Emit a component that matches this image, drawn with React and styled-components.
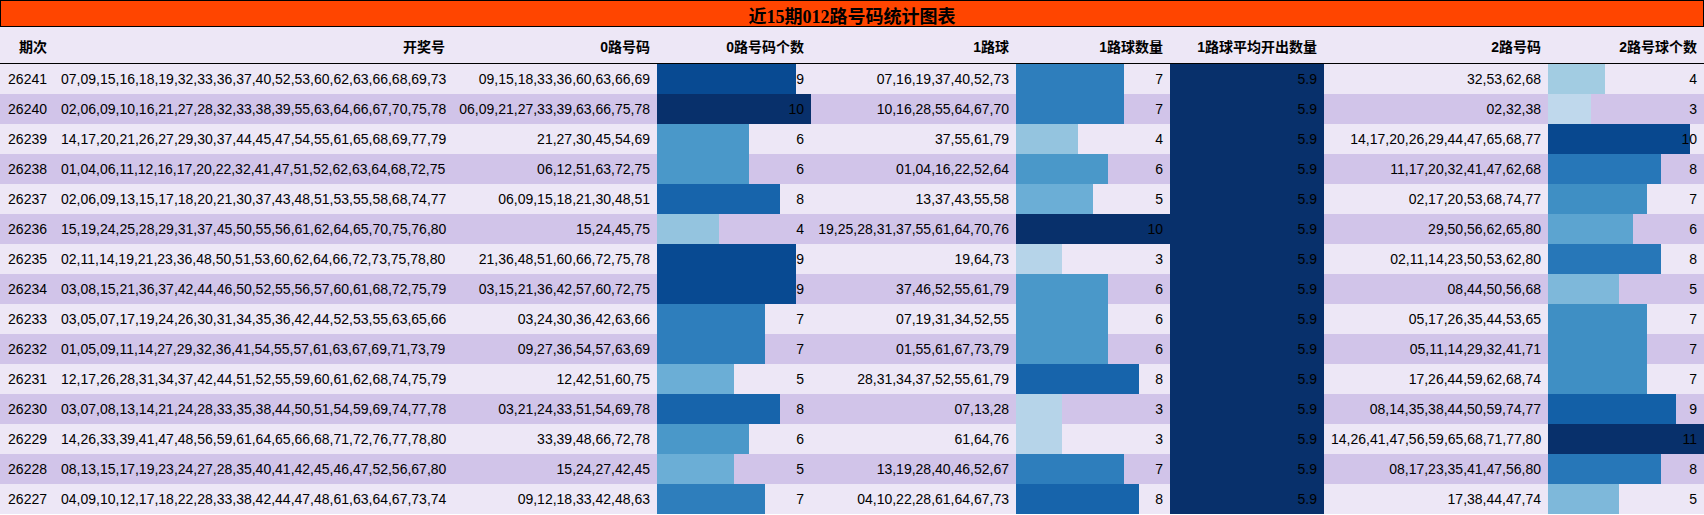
import React from 'react';
import styled, { createGlobalStyle } from 'styled-components';

const GlobalStyle = createGlobalStyle`
  html, body { margin: 0; padding: 0; background: #ffffff; }
  body { font-family: "Liberation Sans", "Noto Sans CJK SC", sans-serif; color: #000; }
`;

const BLUES = ['#f7fbff', '#deebf7', '#c6dbef', '#9ecae1', '#6baed6', '#4292c6', '#2171b5', '#08519c', '#08306b'];

function hexToRgb(h) {
  const n = parseInt(h.slice(1), 16);
  return [(n >> 16) & 255, (n >> 8) & 255, n & 255];
}

function blues(t) {
  const x = Math.max(0, Math.min(1, t)) * (BLUES.length - 1);
  const i = Math.min(Math.floor(x), BLUES.length - 2);
  const f = x - i;
  const a = hexToRgb(BLUES[i]);
  const b = hexToRgb(BLUES[i + 1]);
  const c = a.map((v, k) => Math.round(v + (b[k] - v) * f));
  return `rgb(${c[0]}, ${c[1]}, ${c[2]})`;
}

const rows = [
  ['26241', '07,09,15,16,18,19,32,33,36,37,40,52,53,60,62,63,66,68,69,73', '09,15,18,33,36,60,63,66,69', 9, '07,16,19,37,40,52,73', 7, 5.9, '32,53,62,68', 4],
  ['26240', '02,06,09,10,16,21,27,28,32,33,38,39,55,63,64,66,67,70,75,78', '06,09,21,27,33,39,63,66,75,78', 10, '10,16,28,55,64,67,70', 7, 5.9, '02,32,38', 3],
  ['26239', '14,17,20,21,26,27,29,30,37,44,45,47,54,55,61,65,68,69,77,79', '21,27,30,45,54,69', 6, '37,55,61,79', 4, 5.9, '14,17,20,26,29,44,47,65,68,77', 10],
  ['26238', '01,04,06,11,12,16,17,20,22,32,41,47,51,52,62,63,64,68,72,75', '06,12,51,63,72,75', 6, '01,04,16,22,52,64', 6, 5.9, '11,17,20,32,41,47,62,68', 8],
  ['26237', '02,06,09,13,15,17,18,20,21,30,37,43,48,51,53,55,58,68,74,77', '06,09,15,18,21,30,48,51', 8, '13,37,43,55,58', 5, 5.9, '02,17,20,53,68,74,77', 7],
  ['26236', '15,19,24,25,28,29,31,37,45,50,55,56,61,62,64,65,70,75,76,80', '15,24,45,75', 4, '19,25,28,31,37,55,61,64,70,76', 10, 5.9, '29,50,56,62,65,80', 6],
  ['26235', '02,11,14,19,21,23,36,48,50,51,53,60,62,64,66,72,73,75,78,80', '21,36,48,51,60,66,72,75,78', 9, '19,64,73', 3, 5.9, '02,11,14,23,50,53,62,80', 8],
  ['26234', '03,08,15,21,36,37,42,44,46,50,52,55,56,57,60,61,68,72,75,79', '03,15,21,36,42,57,60,72,75', 9, '37,46,52,55,61,79', 6, 5.9, '08,44,50,56,68', 5],
  ['26233', '03,05,07,17,19,24,26,30,31,34,35,36,42,44,52,53,55,63,65,66', '03,24,30,36,42,63,66', 7, '07,19,31,34,52,55', 6, 5.9, '05,17,26,35,44,53,65', 7],
  ['26232', '01,05,09,11,14,27,29,32,36,41,54,55,57,61,63,67,69,71,73,79', '09,27,36,54,57,63,69', 7, '01,55,61,67,73,79', 6, 5.9, '05,11,14,29,32,41,71', 7],
  ['26231', '12,17,26,28,31,34,37,42,44,51,52,55,59,60,61,62,68,74,75,79', '12,42,51,60,75', 5, '28,31,34,37,52,55,61,79', 8, 5.9, '17,26,44,59,62,68,74', 7],
  ['26230', '03,07,08,13,14,21,24,28,33,35,38,44,50,51,54,59,69,74,77,78', '03,21,24,33,51,54,69,78', 8, '07,13,28', 3, 5.9, '08,14,35,38,44,50,59,74,77', 9],
  ['26229', '14,26,33,39,41,47,48,56,59,61,64,65,66,68,71,72,76,77,78,80', '33,39,48,66,72,78', 6, '61,64,76', 3, 5.9, '14,26,41,47,56,59,65,68,71,77,80', 11],
  ['26228', '08,13,15,17,19,23,24,27,28,35,40,41,42,45,46,47,52,56,67,80', '15,24,27,42,45', 5, '13,19,28,40,46,52,67', 7, 5.9, '08,17,23,35,41,47,56,80', 8],
  ['26227', '04,09,10,12,17,18,22,28,33,38,42,44,47,48,61,63,64,67,73,74', '09,12,18,33,42,48,63', 7, '04,10,22,28,61,64,67,73', 8, 5.9, '17,38,44,47,74', 5],
];

const columns = [
  { title: '期次', width: 54 },
  { title: '开奖号', width: 398 },
  { title: '0路号码', width: 205 },
  { title: '0路号码个数', width: 154, bar: true },
  { title: '1路球', width: 205 },
  { title: '1路球数量', width: 154, bar: true },
  { title: '1路球平均开出数量', width: 154, bar: true },
  { title: '2路号码', width: 224 },
  { title: '2路号球个数', width: 156, bar: true },
];

const maxes = columns.map((c, i) => (c.bar ? Math.max(...rows.map((r) => r[i])) : null));

const Page = styled.div`
  width: 1704px;
`;

const Title = styled.div`
  box-sizing: border-box;
  height: 27px;
  border: 1px solid #000;
  background: #ff4500;
  display: flex;
  align-items: center;
  justify-content: center;
  padding-top: 2px;
  font-family: "Liberation Serif", "Noto Sans CJK SC", serif;
  font-weight: bold;
  font-size: 18px;
  color: #000;
`;

const Table = styled.table`
  width: 1704px;
  table-layout: fixed;
  border-collapse: separate;
  border-spacing: 0;
  font-size: 14px;
`;

const HeadRow = styled.tr`
  background: #ede7f6;
`;

const HeadCell = styled.th`
  padding: 12px 7px 8px;
  line-height: 16px;
  text-align: right;
  font-weight: bold;
  white-space: nowrap;
  border-bottom: 1px solid #000;
`;

const Row = styled.tr`
  background: ${(p) => (p.$alt ? '#d1c4e9' : '#ede7f6')};
`;

const Cell = styled.td`
  padding: 0 7px;
  height: 30px;
  line-height: 30px;
  text-align: right;
  white-space: nowrap;
  overflow: visible;
`;

const BarCell = styled(Cell)`
  background-image: linear-gradient(
    90deg,
    ${(p) => p.$color} 0%,
    ${(p) => p.$color} ${(p) => p.$pct}%,
    transparent ${(p) => p.$pct}%
  );
`;

export default function App() {
  return (
    <Page>
      <GlobalStyle />
      <Title>近15期012路号码统计图表</Title>
      <Table>
        <colgroup>
          {columns.map((c) => (
            <col key={c.title} style={{ width: c.width }} />
          ))}
        </colgroup>
        <thead>
          <HeadRow>
            {columns.map((c) => (
              <HeadCell key={c.title}>{c.title}</HeadCell>
            ))}
          </HeadRow>
        </thead>
        <tbody>
          {rows.map((r, ri) => (
            <Row key={r[0]} $alt={ri % 2 === 1}>
              {r.map((v, ci) => {
                if (columns[ci].bar) {
                  const t = v / maxes[ci];
                  return (
                    <BarCell key={ci} $pct={(t * 100).toFixed(2)} $color={blues(t)}>
                      {v}
                    </BarCell>
                  );
                }
                return <Cell key={ci}>{v}</Cell>;
              })}
            </Row>
          ))}
        </tbody>
      </Table>
    </Page>
  );
}
